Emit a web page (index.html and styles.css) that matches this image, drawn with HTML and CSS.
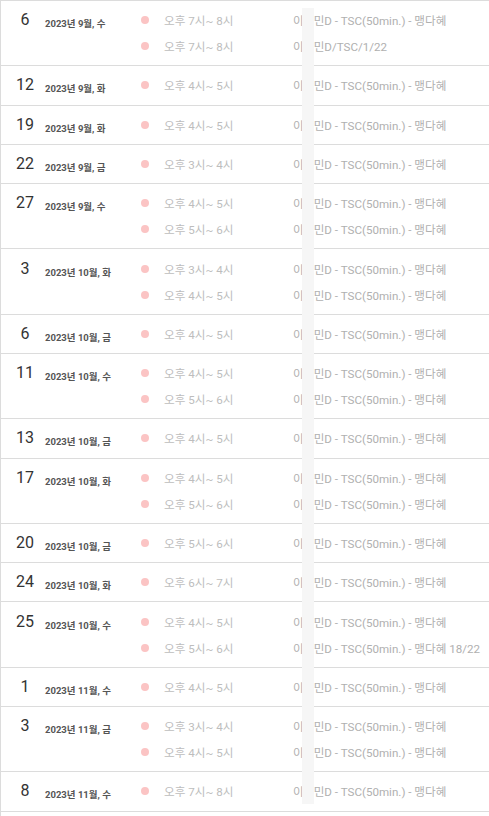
FILE: index.html
```html
<!DOCTYPE html>
<html lang="ko">
<head>
  <meta charset="UTF-8" />
  <meta name="viewport" content="width=device-width, initial-scale=1.0"/>
  <title>수업 일정</title>
  <link rel="stylesheet" href="styles.css">
</head>
<body>
  <div class="schedule">

    <div class="day">
      <div class="day-num">6</div>
      <div class="day-date">2023년 9월, 수</div>
      <ul class="slots">
        <li class="slot"><span class="dot"></span><span class="time">오후 7시~ 8시</span><span class="desc">이<span class="gap"></span>민D - TSC(50min.) - 맹다혜</span></li>
        <li class="slot"><span class="dot"></span><span class="time">오후 7시~ 8시</span><span class="desc">이<span class="gap"></span>민D/TSC/1/22</span></li>
      </ul>
    </div>

    <div class="day">
      <div class="day-num">12</div>
      <div class="day-date">2023년 9월, 화</div>
      <ul class="slots">
        <li class="slot"><span class="dot"></span><span class="time">오후 4시~ 5시</span><span class="desc">이<span class="gap"></span>민D - TSC(50min.) - 맹다혜</span></li>
      </ul>
    </div>

    <div class="day">
      <div class="day-num">19</div>
      <div class="day-date">2023년 9월, 화</div>
      <ul class="slots">
        <li class="slot"><span class="dot"></span><span class="time">오후 4시~ 5시</span><span class="desc">이<span class="gap"></span>민D - TSC(50min.) - 맹다혜</span></li>
      </ul>
    </div>

    <div class="day">
      <div class="day-num">22</div>
      <div class="day-date">2023년 9월, 금</div>
      <ul class="slots">
        <li class="slot"><span class="dot"></span><span class="time">오후 3시~ 4시</span><span class="desc">이<span class="gap"></span>민D - TSC(50min.) - 맹다혜</span></li>
      </ul>
    </div>

    <div class="day">
      <div class="day-num">27</div>
      <div class="day-date">2023년 9월, 수</div>
      <ul class="slots">
        <li class="slot"><span class="dot"></span><span class="time">오후 4시~ 5시</span><span class="desc">이<span class="gap"></span>민D - TSC(50min.) - 맹다혜</span></li>
        <li class="slot"><span class="dot"></span><span class="time">오후 5시~ 6시</span><span class="desc">이<span class="gap"></span>민D - TSC(50min.) - 맹다혜</span></li>
      </ul>
    </div>

    <div class="day">
      <div class="day-num">3</div>
      <div class="day-date">2023년 10월, 화</div>
      <ul class="slots">
        <li class="slot"><span class="dot"></span><span class="time">오후 3시~ 4시</span><span class="desc">이<span class="gap"></span>민D - TSC(50min.) - 맹다혜</span></li>
        <li class="slot"><span class="dot"></span><span class="time">오후 4시~ 5시</span><span class="desc">이<span class="gap"></span>민D - TSC(50min.) - 맹다혜</span></li>
      </ul>
    </div>

    <div class="day">
      <div class="day-num">6</div>
      <div class="day-date">2023년 10월, 금</div>
      <ul class="slots">
        <li class="slot"><span class="dot"></span><span class="time">오후 4시~ 5시</span><span class="desc">이<span class="gap"></span>민D - TSC(50min.) - 맹다혜</span></li>
      </ul>
    </div>

    <div class="day">
      <div class="day-num">11</div>
      <div class="day-date">2023년 10월, 수</div>
      <ul class="slots">
        <li class="slot"><span class="dot"></span><span class="time">오후 4시~ 5시</span><span class="desc">이<span class="gap"></span>민D - TSC(50min.) - 맹다혜</span></li>
        <li class="slot"><span class="dot"></span><span class="time">오후 5시~ 6시</span><span class="desc">이<span class="gap"></span>민D - TSC(50min.) - 맹다혜</span></li>
      </ul>
    </div>

    <div class="day">
      <div class="day-num">13</div>
      <div class="day-date">2023년 10월, 금</div>
      <ul class="slots">
        <li class="slot"><span class="dot"></span><span class="time">오후 4시~ 5시</span><span class="desc">이<span class="gap"></span>민D - TSC(50min.) - 맹다혜</span></li>
      </ul>
    </div>

    <div class="day">
      <div class="day-num">17</div>
      <div class="day-date">2023년 10월, 화</div>
      <ul class="slots">
        <li class="slot"><span class="dot"></span><span class="time">오후 4시~ 5시</span><span class="desc">이<span class="gap"></span>민D - TSC(50min.) - 맹다혜</span></li>
        <li class="slot"><span class="dot"></span><span class="time">오후 5시~ 6시</span><span class="desc">이<span class="gap"></span>민D - TSC(50min.) - 맹다혜</span></li>
      </ul>
    </div>

    <div class="day">
      <div class="day-num">20</div>
      <div class="day-date">2023년 10월, 금</div>
      <ul class="slots">
        <li class="slot"><span class="dot"></span><span class="time">오후 5시~ 6시</span><span class="desc">이<span class="gap"></span>민D - TSC(50min.) - 맹다혜</span></li>
      </ul>
    </div>

    <div class="day">
      <div class="day-num">24</div>
      <div class="day-date">2023년 10월, 화</div>
      <ul class="slots">
        <li class="slot"><span class="dot"></span><span class="time">오후 6시~ 7시</span><span class="desc">이<span class="gap"></span>민D - TSC(50min.) - 맹다혜</span></li>
      </ul>
    </div>

    <div class="day">
      <div class="day-num">25</div>
      <div class="day-date">2023년 10월, 수</div>
      <ul class="slots">
        <li class="slot"><span class="dot"></span><span class="time">오후 4시~ 5시</span><span class="desc">이<span class="gap"></span>민D - TSC(50min.) - 맹다혜</span></li>
        <li class="slot"><span class="dot"></span><span class="time">오후 5시~ 6시</span><span class="desc">이<span class="gap"></span>민D - TSC(50min.) - 맹다혜 18/22</span></li>
      </ul>
    </div>

    <div class="day">
      <div class="day-num">1</div>
      <div class="day-date">2023년 11월, 수</div>
      <ul class="slots">
        <li class="slot"><span class="dot"></span><span class="time">오후 4시~ 5시</span><span class="desc">이<span class="gap"></span>민D - TSC(50min.) - 맹다혜</span></li>
      </ul>
    </div>

    <div class="day">
      <div class="day-num">3</div>
      <div class="day-date">2023년 11월, 금</div>
      <ul class="slots">
        <li class="slot"><span class="dot"></span><span class="time">오후 3시~ 4시</span><span class="desc">이<span class="gap"></span>민D - TSC(50min.) - 맹다혜</span></li>
        <li class="slot"><span class="dot"></span><span class="time">오후 4시~ 5시</span><span class="desc">이<span class="gap"></span>민D - TSC(50min.) - 맹다혜</span></li>
      </ul>
    </div>

    <div class="day">
      <div class="day-num">8</div>
      <div class="day-date">2023년 11월, 수</div>
      <ul class="slots">
        <li class="slot"><span class="dot"></span><span class="time">오후 7시~ 8시</span><span class="desc">이<span class="gap"></span>민D - TSC(50min.) - 맹다혜</span></li>
      </ul>
    </div>

    <!-- privacy mask over the student name -->
    <div class="mask"></div>
  </div>
</body>
</html>
```

FILE: styles.css
```css
* {
  box-sizing: border-box;
}
body {
  margin: 0;
  background: white;
  font-family: Roboto, "Noto Sans CJK KR", sans-serif;
}
.schedule {
  position: relative;
  min-height: 100vh;
  border-left: 1px solid #dcdcdc;
  border-top: 1px solid #dcdcdc;
  overflow: hidden;
}
.day {
  display: flex;
  align-items: flex-start;
  padding: 6.15px 0;
  border-bottom: 1px solid #dcdcdc;
}
.day-num {
  flex: none;
  width: 30px;
  margin-left: 9px;
  margin-right: 5px;
  text-align: center;
  font-size: 16px;
  line-height: 26px;
  color: #333;
}
.day-date {
  flex: none;
  width: 96px;
  min-width: 0;
  height: 26px;
  padding-top: 8px;
  font-size: 9.5px;
  line-height: 18px;
  font-weight: bold;
  white-space: nowrap;
  color: #555;
}
.slots {
  flex: none;
  list-style: none;
  margin: 0;
  padding: 0;
}
.slot {
  display: flex;
  align-items: center;
  height: 26px;
  font-size: 11.6px;
  white-space: nowrap;
}
.dot {
  flex: none;
  width: 8px;
  height: 8px;
  margin-right: 15px;
  border-radius: 50%;
  background: #fbc4c4;
}
.time {
  flex: none;
  width: 129px;
  color: #bdbdbd;
}
.desc {
  color: #b0b0b0;
}
.gap {
  display: inline-block;
  width: 10px;
}
.mask {
  position: absolute;
  top: 7px;
  bottom: 12px;
  left: 301px;
  width: 12px;
  background: #f6f6f6;
}
```
